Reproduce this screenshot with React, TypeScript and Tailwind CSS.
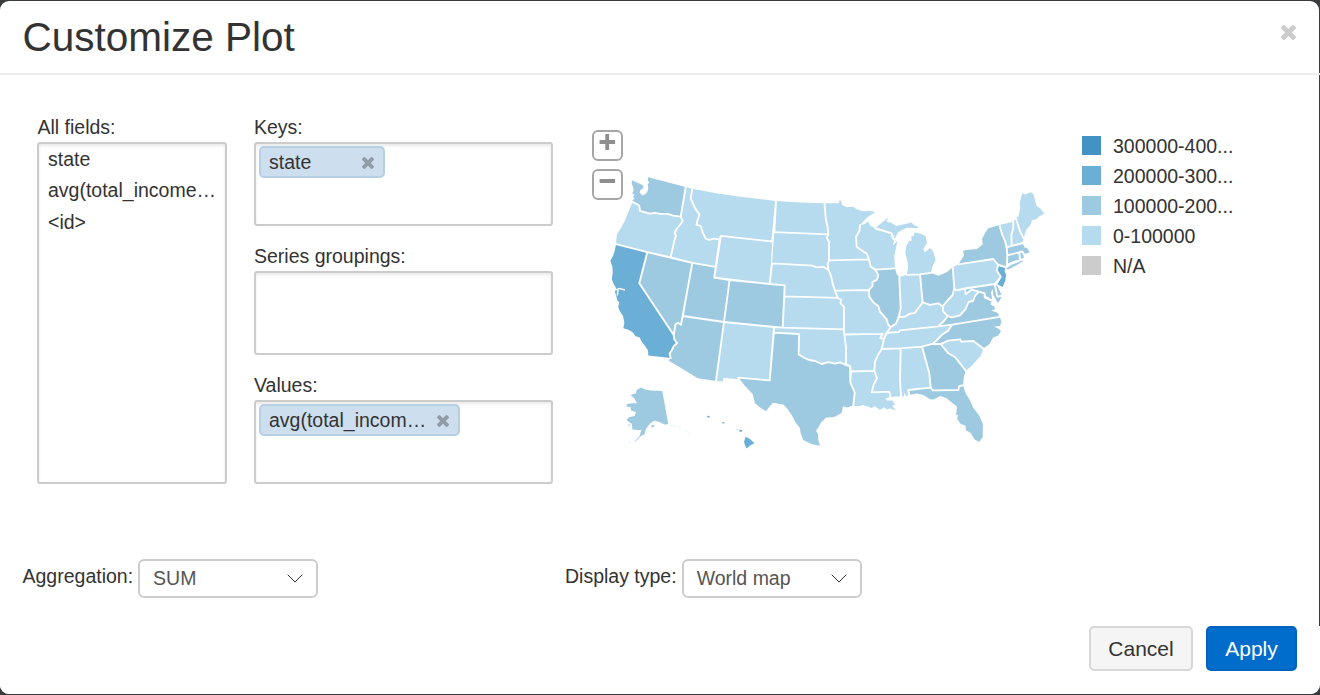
import type { ReactNode } from 'react';

const LIGHT = '#b6daee';
const MID = '#9ecae1';
const DARK = '#6baed6';

type Region = { id: string; fill: string; points: string };

const states: Region[] = [
  { id: 'WA', fill: MID, points: '648.3,177 652,178.2 685.7,186.9 684.6,194 680.7,216.7 673,215.6 667,213.6 661.7,214.2 655,212.8 650,213.6 643.5,212 640,210.7 639.3,206 637.3,204.3 633.5,202.5 631.6,201 634.6,198.3 633,197 634.3,194.3 632,193.6 633.6,191 633.3,188 631.6,183 632.4,180.2 636,182.3 639.3,183.6 643.3,185.6 643.3,188 640.3,190.3 639.6,192.6 642.3,195.4 645.3,194.3 647.3,191.8 648.3,187.5 647.6,184.6 649.3,182.6 647.7,180.3' },
  { id: 'OR', fill: LIGHT, points: '632.6,202 637.3,204.3 639.3,206 640,210.7 643.5,212 650,213.6 655,212.8 661.7,214.2 667,213.6 673,215.6 680.7,216.7 682.7,221 680,225 676.6,229 674.6,233 676,235.6 674.3,241 670.7,257.3 647.3,252.2 616,244.2 616.8,234.6 620.4,229 624.8,221 629.8,208.6' },
  { id: 'CA', fill: DARK, points: '616,244.2 647.3,252.2 639.3,283.3 673.7,335 674.2,339 677,343.3 673.6,346.3 671.6,350.6 669.6,353.6 670.7,358 648.3,355.6 648,350.6 645.4,346.6 641.6,341.6 639.7,337.6 635.6,336.3 632.7,332.3 628.5,329.7 623.3,328.3 624.4,323 623,316 620,311.6 618.2,307 619.3,302.3 617.2,300.4 616.3,296 614.9,292 616.4,288.6 613.6,284 611.8,279 612.7,273 612.4,266.7 610.3,260.7 613,256 614.8,250.6' },
  { id: 'NV', fill: MID, points: '647.3,252.2 692.3,262.9 682.7,316 681,324.8 678.4,322.9 675.6,324 673.7,335 639.3,283.3' },
  { id: 'ID', fill: LIGHT, points: '685.7,186.9 692.3,188.7 690.7,198.3 693,203.6 695.3,208.6 699.5,214.6 697.8,219.6 696.5,224.6 700.8,226.3 702.6,232.3 705.7,238.6 709,239.9 714,238.6 719.6,239.4 715.7,266.9 692.3,262.9 670.7,257.3 674.3,241 676,235.6 674.6,233 676.6,229 680,225 682.7,221 680.7,216.7' },
  { id: 'MT', fill: LIGHT, points: '692.3,188.7 716,193.3 740,196.7 776,201 772.3,241.5 720.9,235.9 719.6,239.4 714,238.6 709,239.9 705.7,238.6 702.6,232.3 700.8,226.3 696.5,224.6 697.8,219.6 699.5,214.6 695.3,208.6 693,203.6 690.7,198.3' },
  { id: 'WY', fill: LIGHT, points: '720.9,235.9 772.3,241.5 769.7,284 714.3,277.7' },
  { id: 'UT', fill: MID, points: '692.3,262.9 715.7,266.9 714.3,277.7 729.6,280 724,322 682.7,316' },
  { id: 'CO', fill: MID, points: '729.6,280 769.7,284 784.7,285.3 782.7,327.6 724,322' },
  { id: 'AZ', fill: MID, points: '682.7,316 724,322 716,380.9 697.7,378.3 668.3,360.3 670.7,358 669.6,353.6 671.6,350.6 673.6,346.3 677,343.3 674.2,339 673.7,335 675.6,324 678.4,322.9 681,324.8' },
  { id: 'NM', fill: LIGHT, points: '724,322 774.3,327.2 769.7,380.4 738.3,377.6 738.5,379.2 723.3,377.8 722.7,381.6 716,380.9' },
  { id: 'ND', fill: LIGHT, points: '776,201 800,202.6 824.5,203.3 825.8,219 827.4,226 828.3,234.3 774.3,232.2' },
  { id: 'SD', fill: LIGHT, points: '774.3,232.2 828.3,234.3 826.7,238 829,241.7 829,260.3 827.6,264 828.6,270 823.3,266.9 816.7,267.3 812.7,265.7 772,263.3' },
  { id: 'NE', fill: LIGHT, points: '772,263.3 812.7,265.7 816.7,267.3 823.3,266.9 828.6,270 831,276 833,285 835,290.7 837.7,297.9 784.3,296.4 784.7,285.3 769.7,284' },
  { id: 'KS', fill: LIGHT, points: '784.3,296.4 837.7,297.9 841,299.8 840.4,303 844,307 844,329.4 782.7,327.6' },
  { id: 'OK', fill: LIGHT, points: '774.3,327.2 782.7,327.6 844,329.4 844.3,334.5 846,347 846,365 840,362.3 835,363.6 828.3,362.1 821.7,364 815,361 809,360 803.3,357.3 798.7,354.3 799,334 773.5,332.7' },
  { id: 'TX', fill: MID, points: '773.5,332.7 799,334 798.7,354.3 803.3,357.3 809,360 815,361 821.7,364 828.3,362.1 835,363.6 840,362.3 846,365 850,366 850.3,382.3 854.7,392.7 853.3,405.4 847,407.6 843,406.3 841.6,413 835,416.7 826,417.7 821,422.6 818.4,427.6 816,430.4 818,434.3 818.3,440 820,445.7 812,444.3 803.3,440 800.6,433 800,428.3 795,421.6 791.7,415 787.6,409 783.3,404.6 773.3,402.7 770,406 766,411.3 760,407.6 755,403.3 752.7,394 745,386 738.3,377.6 769.7,380.4' },
  { id: 'MN', fill: LIGHT, points: '824.5,203.3 839,203.3 839.5,200 841,200.6 842,205 847,207.3 853.3,206.8 857,209.6 863.3,211.3 869,210.8 875.6,212 868,216.8 860,225 859.4,231 856,236.7 856.7,246.7 861,250 866.7,253.6 869,259.3 829,260.3 829,241.7 826.7,238 828.3,234.3 827.4,226 825.8,219' },
  { id: 'IA', fill: LIGHT, points: '829,260.3 869,259.3 870.7,266.7 875.3,269.6 878.3,275.3 877,279.6 872.3,282.3 872.6,286 869,290 835,290.7 833,285 831,276 828.6,270 827.6,264' },
  { id: 'MO', fill: LIGHT, points: '835,290.7 869,290 869.3,296.6 874,303 878.3,306 880,311.7 886.7,319.3 888.3,325 890.7,327 889.3,329.3 886,333.3 884,339 880.3,338 882.7,333.8 844.3,334.5 844,329.4 844,307 840.4,303 841,299.8 837.7,297.9' },
  { id: 'AR', fill: LIGHT, points: '844.3,334.5 882.7,333.8 880.3,338 884,339 881.7,349 878,355 875,361.7 874.3,370.9 851,371.5 850,366 846,365 846,347' },
  { id: 'LA', fill: LIGHT, points: '851,371.5 874.3,370.9 877,378.3 873.6,385 871.7,392.3 889.3,391.7 890.6,397 885.6,398.3 886.3,400.6 892.6,400.6 893.6,403 895.6,405 892,405.6 896,410.7 890,408.3 886.7,409.6 884,407.3 880,410 875,406.3 871.7,408 863.3,405 858,406.2 853.3,405.4 854.7,392.7 850.3,382.3' },
  { id: 'WI', fill: LIGHT, points: '860,225 864,224.3 868.3,221.6 870,225.6 875.4,228.6 891.7,233.3 892.6,238 894.4,240 892.6,246 897.3,240.6 896,248 894.3,256 895,268.3 875.7,269.6 870.7,266.7 869,259.3 866.7,253.6 861,250 856.7,246.7 856,236.7 859.4,231' },
  { id: 'UP', fill: LIGHT, points: '875.4,228.2 881,223.3 888.3,217.8 886.6,222 891,222.6 896,226 904,224.2 911.7,222.6 914,225.3 919,226.9 916,228.3 907,227.8 901,230.4 898,232.6 895,238 893.6,238.6 891.7,233.3' },
  { id: 'MI', fill: LIGHT, points: '906.7,274.8 908,268 907.3,260 905.3,253.6 906.3,246 909.4,240.6 911.6,241 911.3,236 914,236 914.3,232.6 920,233.6 925.6,236 927,243 923.3,249 924.6,252.6 930,248 933,251 935.7,260 932.6,266 931,272.9 920,274.4' },
  { id: 'IL', fill: MID, points: '875.7,269.6 895,268.3 896.6,274 899.3,277.3 900.7,308.3 898.6,317 896,323.6 890.7,327 888.3,325 886.7,319.3 880,311.7 878.3,306 874,303 869.3,296.6 869,290 872.6,286 872.3,282.3 877,279.6 878.3,275.3 875.3,269.6' },
  { id: 'IN', fill: LIGHT, points: '899.3,277.3 906.7,274.8 920,274.4 922.7,302.3 918.3,308.3 914.6,313 910,313.6 905,316.6 898.6,317 900.7,308.3' },
  { id: 'OH', fill: MID, points: '920,274.4 931,272.9 938.3,275.7 946.7,272.3 952.7,267.3 954.3,288.3 952.6,295 948,300 942.7,306.4 938.3,303.3 930,304.8 922.7,302.3' },
  { id: 'KY', fill: LIGHT, points: '890.7,327 896,323.6 898.6,317 905,316.6 910,313.6 914.6,313 918.3,308.3 922.7,302.3 930,304.8 938.3,303.3 942.7,306.4 943.3,311.7 947.7,316 944,321 938.3,326.3 900,330.3 899,332 887,332.8 889.3,329.3' },
  { id: 'TN', fill: LIGHT, points: '887,332.8 899,332 900,330.3 938.3,326.3 952.3,324.6 948.3,330.6 942,334.6 937,340 932.4,343.9 922,346.6 900.7,348.3 881.7,349 884,339' },
  { id: 'WV', fill: LIGHT, points: '954.3,288.3 956.4,290.3 965,288.5 965.7,294.3 971.7,289.6 979,291.6 975,296 973,301 968.6,302 965.6,309 960,315.3 951.7,317.4 947.7,316 943.3,311.7 942.7,306.4 948,300 952.6,295' },
  { id: 'PA', fill: LIGHT, points: '952.7,267.3 958.3,264.4 993.3,259 998.3,265 996.7,270.3 1000.7,276.7 995,284 965,288.5 956.4,290.3 954.3,288.3' },
  { id: 'NY', fill: MID, points: '958.3,264.4 964,255.6 963,250.7 970,249.6 976.7,249.3 982.7,244.6 982,239 985.6,232 988.3,228.3 999.3,225 1002,234 1005,241 1006.7,248.3 1007.3,255.3 1007,265.6 1005.6,266.8 998.3,265 993.3,259' },
  { id: 'NJ', fill: DARK, points: '998.3,265 1005.4,267.2 1004.6,271 1006.2,275 1005.2,281 1002.6,287 996.6,284 1000.7,276.7 996.7,270.3' },
  { id: 'VT', fill: LIGHT, points: '999.3,225 1013.3,221.7 1013.3,228 1011.4,235 1011.7,245.9 1006.7,247.3 1005,241 1002,234' },
  { id: 'NH', fill: LIGHT, points: '1013.3,221.7 1015.7,218 1020,231 1023.6,238.3 1022.6,243 1011.7,245.9 1011.4,235 1013.3,228' },
  { id: 'ME', fill: LIGHT, points: '1015.7,218 1018.3,216.7 1020.3,208 1019.6,203.3 1022.3,193.3 1025,194.6 1031,192.3 1033.3,194 1036.7,206.3 1040,208 1044.4,213.6 1039,216.6 1036,219.6 1032.3,220 1030,225.6 1026.3,229.6 1023.6,238.3 1020,231' },
  { id: 'MA', fill: MID, points: '1006.7,247.3 1011.7,245.9 1022.6,243.3 1024.6,247.6 1027.6,248.6 1029.6,252.6 1024,254 1022.3,251.5 1019.3,252.3 1007.3,255.3' },
  { id: 'CT', fill: MID, points: '1007.3,255.3 1019.3,252.3 1020,259.3 1013,261.2 1007,264' },
  { id: 'RI', fill: MID, points: '1019.3,252.3 1022.3,251.5 1024,257.4 1020,259.3' },
  { id: 'MD', fill: MID, points: '965,288.5 994.6,284 997.4,296.6 1002,295.8 1000,300.2 997.6,303 995.6,299 993.3,295 992.6,289 990.9,292.6 992.2,299 988.6,298.6 984.6,296.2 984.6,293.4 979,291.6 971.7,289.6 965.7,294.3' },
  { id: 'DE', fill: MID, points: '994.6,284 996.6,284.6 999,289.6 1001.8,295.6 997.4,296.6' },
  { id: 'VA', fill: MID, points: '938.3,326.3 944,321 947.7,316 951.7,317.4 960,315.3 965.6,309 968.6,302 973,301 975,296 979,291.6 984.6,293.4 985,297.6 992.2,300.6 990.4,304.2 994.6,307 995,309.6 991,310.3 997.6,313 999.7,316.8 952.3,324.6' },
  { id: 'NC', fill: MID, points: '952.3,324.6 999.7,316.8 1001.6,322 1000,326 994,326.6 999,329 1001,331 998.3,335.6 993,337.6 989.6,344 983.3,348.5 973.3,341 961.7,341.7 960,339.3 948.3,340.7 940.7,344 932.4,343.9 937,340 942,334.6 948.3,330.6' },
  { id: 'SC', fill: LIGHT, points: '940.7,344 948.3,340.7 960,339.3 961.7,341.7 973.3,341 983.3,348.5 980.6,356 975.6,361.6 971.6,366 965.7,370.7 960,363.3 955,357 948.3,353.3' },
  { id: 'GA', fill: MID, points: '922,346.6 932.4,343.9 940.7,344 948.3,353.3 955,357 960,363.3 965.7,370.7 963.6,378 963.3,385.3 959.3,386 958.3,390 932.7,390.3 930.7,387.7 929.3,373.3' },
  { id: 'AL', fill: LIGHT, points: '900.7,348.3 922,346.6 929.3,373.3 930.7,387.7 908.3,390 909,395 906.3,396.2 904.6,393 903.6,396.6 901,396.4 900,380' },
  { id: 'MS', fill: LIGHT, points: '881.7,349 900.7,348.3 900,380 901,396.4 895,396.6 890.6,397.4 889.3,391.7 871.7,392.3 873.6,385 877,378.3 874.3,370.9 875,361.7 878,355' },
  { id: 'FL', fill: MID, points: '908.3,390 930.7,387.7 932.7,390.3 958.3,390 959.3,386 963.3,385.3 965,392 970,400.6 973,407.3 979.6,416.3 982.9,424 982.7,437 979.3,442 974.6,439.6 970.6,433 966,430.3 965.3,425.6 960.7,424 957,418.6 958.3,414.6 956,415.3 957,406.6 951,402 946.7,398.3 940,396 934,399.6 930,399.3 923.3,395 917,393.6 909.4,395' },
];

const islands: Region[] = [
  { id: 'AK', fill: MID, points: '641.3,387.6 645,389.6 651,390.4 662.3,391 668.3,424.3 664.6,424.6 659,421.7 654,420.8 650,423.6 646,429 644.6,434 640.3,436.6 636,441 634,442 639.6,436 641.3,430.3 632.3,429.6 632,424 626.6,420.3 628.6,417.3 634.6,416 636,411.9 631,410.6 630.6,407.3 626.6,406.6 626.8,404.3 632,403.3 637,403.3 634,398 630.6,395 636,393.3 636.6,390' },
  { id: 'HI', fill: DARK, points: '745.6,436.8 750,439 754.4,443.3 750,445.6 746.7,448.6 745.3,446 744,441.7' },
  { id: 'oahu', fill: DARK, points: '722,422 724,422.3 724.6,423.6 722.6,423.4' },
  { id: 'kauai', fill: DARK, points: '707.3,415.8 709.8,416 709,417.8 707.2,417.2' },
  { id: 'maui', fill: DARK, points: '738.6,429.6 742.3,430.3 741.6,432 739.6,431.4' },
  { id: 'lanai', fill: LIGHT, points: '736,429 738,429.2 737.4,430.2' },
  { id: 'kodiak', fill: MID, points: '651,425.6 654.6,424.6 654,426.6 651.6,427.8' },
  { id: 'nunivak', fill: MID, points: '628,425 630.6,424 629,426.2' },
  { id: 'LI', fill: MID, points: '1006,268.4 1012,264.4 1018,262.4 1023.6,259.8 1022,262 1016,265.6 1008,269.6' },
];

type Point = [number, number];
type Edge = { id: string; a: Point; b: Point };

const edges: Edge[] = states.flatMap((s) => {
  const pts = s.points.split(' ').map((p) => p.split(',').map(Number) as Point);
  return pts.map((a, i) => ({ id: s.id, a, b: pts[(i + 1) % pts.length] }));
});

function distance([px, py]: Point, { a, b }: Edge) {
  const dx = b[0] - a[0];
  const dy = b[1] - a[1];
  const t = Math.max(0, Math.min(1, ((px - a[0]) * dx + (py - a[1]) * dy) / (dx * dx + dy * dy || 1)));
  return Math.hypot(px - a[0] - t * dx, py - a[1] - t * dy);
}

// Only edges shared by two states get a border line; coastlines stay unstroked.
const borders = edges
  .filter((e) => {
    const mid: Point = [(e.a[0] + e.b[0]) / 2, (e.a[1] + e.b[1]) / 2];
    return edges.some((o) => o.id !== e.id && distance(mid, o) < 0.9);
  })
  .map((e) => `M${e.a.join(' ')}L${e.b.join(' ')}`)
  .join('');

function UsMap() {
  return (
    <svg className="block h-[290px] w-[460px]" viewBox="600 170 460 290" role="img" aria-label="United States map">
      {[...states, ...islands].map((s) => (
        <polygon key={s.id} fill={s.fill} points={s.points} />
      ))}
      <path d={borders} fill="none" stroke="#fff" strokeWidth="1.85" strokeLinecap="round" />
      <path d="M616 290l3-1.6 6 1.6M618 289.5l-.7 6" fill="none" stroke="#fff" strokeWidth="1.4" />
      <path d="M670 425l6 1.5M679 427h2M686 431l4 3M629 443l3-1.4" fill="none" stroke={LIGHT} strokeWidth=".6" strokeDasharray="1.5 2" />
    </svg>
  );
}

function CrossIcon({ className }: { className: string }) {
  return (
    <svg className={className} viewBox="110 366 1188 1188" fill="currentColor" aria-hidden="true">
      <path d="M1298 1322q0 40-28 68l-136 136q-28 28-68 28t-68-28l-294-294-294 294q-28 28-68 28t-68-28l-136-136q-28-28-28-68t28-68l294-294-294-294q-28-28-28-68t28-68l136-136q28-28 68-28t68 28l294 294 294-294q28-28 68-28t68 28l136 136q28 28 28 68t-28 68l-294 294 294 294q28 28 28 68z" />
    </svg>
  );
}

function Chip({ label, width }: { label: string; width: string }) {
  return (
    <div className={`flex h-8 items-center justify-between rounded-[5px] border-2 border-[#b5cfe4] bg-[#cddeef] pr-[9px] pl-[8px] ${width}`}>
      <span className="leading-7">{label}</span>
      <CrossIcon className="mt-px h-3 w-3 text-[#919ca8]" />
    </div>
  );
}

function DropBox({ title, children }: { title: string; children?: ReactNode }) {
  return (
    <div className="h-[129px]">
      <div className="h-[29px] leading-[29px]">{title}</div>
      <div className="h-[84px] w-[299px] rounded-[3px] border-2 border-[#ccc] px-[3px] py-[2px] shadow-[inset_0_2px_3px_rgba(0,0,0,0.09)]">
        {children}
      </div>
    </div>
  );
}

function Select({ label, value }: { label: string; value: string }) {
  return (
    <div className="flex items-start">
      <span className="pr-[5px] leading-[34px]">{label}</span>
      <div className="flex h-[39px] w-[180px] items-center justify-between rounded-md border-2 border-[#ccc] pr-[13px] pl-[13px] text-[#555]">
        <span className="leading-[35px]">{value}</span>
        <svg className="h-[10px] w-4" viewBox="0 0 16 10" fill="none" stroke="#333" strokeWidth="1" aria-hidden="true">
          <path d="M.7 .7L8 8l7.3-7.3" />
        </svg>
      </div>
    </div>
  );
}

const legend = [
  { label: '300000-400...', color: 'bg-[#4292c6]' },
  { label: '200000-300...', color: 'bg-[#6baed6]' },
  { label: '100000-200...', color: 'bg-[#9ecae1]' },
  { label: '0-100000', color: 'bg-[#b6daee]' },
  { label: 'N/A', color: 'bg-[#ccc]' },
];

export default function App() {
  return (
    <div className="h-[695px] w-[1320px] overflow-hidden bg-[#3a3b3d] pt-px font-['Liberation_Sans',Arial,sans-serif] text-[19.5px] text-[#333]">
      <div className="flex h-[693px] w-[1319px] flex-col rounded-[9px] bg-white">
        <header className="flex h-[74px] w-[1320px] shrink-0 items-start justify-between border-b-2 border-[#ececec] pr-6 pl-[22.5px]">
          <h1 className="text-[40.5px] leading-[72px]">Customize Plot</h1>
          <button className="mt-6" aria-label="Close">
            <CrossIcon className="h-[15px] w-[15px] text-[#ccc]" />
          </button>
        </header>

        <main className="flex h-[484px] shrink-0 items-start pt-[38px] pl-[37px]">
          <section className="w-[217px]">
            <div className="h-[29px] pl-[0.5px] leading-[29px]">All fields:</div>
            <ul className="h-[342px] w-[190px] rounded-[3px] border-2 border-[#ccc] pl-[9px] leading-[31.25px] shadow-[inset_0_2px_3px_rgba(0,0,0,0.09)]">
              <li>state</li>
              <li>avg(total_income…</li>
              <li>&lt;id&gt;</li>
            </ul>
          </section>
          <section className="w-[338px]">
            <DropBox title="Keys:">
              <Chip label="state" width="w-[126px]" />
            </DropBox>
            <DropBox title="Series groupings:" />
            <DropBox title="Values:">
              <Chip label="avg(total_incom…" width="w-[201px]" />
            </DropBox>
          </section>
          <section className="relative mt-[57px] ml-2 w-[460px]">
            <UsMap />
            <div className="absolute -top-10 -left-2 flex flex-col gap-2">
              <button className="h-[31px] w-[31px] rounded-md border-2 border-[#a6a6a6] bg-white" aria-label="Zoom in">
                <svg className="h-[27px] w-[27px]" viewBox="0 0 27 27" fill="#8e8e8e"><path d="M11.3 2h3.8v6h6v4h-6v6h-3.8v-6H5.6V8h5.7z" /></svg>
              </button>
              <button className="h-[31px] w-[31px] rounded-md border-2 border-[#a6a6a6] bg-white" aria-label="Zoom out">
                <svg className="h-[27px] w-[27px]" viewBox="0 0 27 27" fill="#8e8e8e"><path d="M5.6 8h15.5v4H5.6z" /></svg>
              </button>
            </div>
          </section>
          <ul className="mt-[18px] ml-[22px]">
            {legend.map((l) => (
              <li key={l.label} className="flex h-[30px] items-start gap-3">
                <span className={`mt-[5px] h-[19px] w-[19px] ${l.color}`} />
                <span className="leading-[31px]">{l.label}</span>
              </li>
            ))}
          </ul>
        </main>

        <div className="flex h-[67px] shrink-0 pl-[22.5px]">
          <div className="w-[542.5px] shrink-0">
            <Select label="Aggregation:" value="SUM" />
          </div>
          <Select label="Display type:" value="World map" />
        </div>

        <footer className="flex w-[1320px] grow items-start justify-end gap-[13px] rounded-b-[9px] bg-white pr-[23px] text-[21px]">
          <button className="h-[45px] w-[104px] rounded-[5px] border-2 border-[#d8d8d8] bg-[#f5f5f5]">Cancel</button>
          <button className="h-[45px] w-[91px] rounded-[5px] border-2 border-[#0063bf] bg-[#006dcc] text-white">Apply</button>
        </footer>
      </div>
    </div>
  );
}
